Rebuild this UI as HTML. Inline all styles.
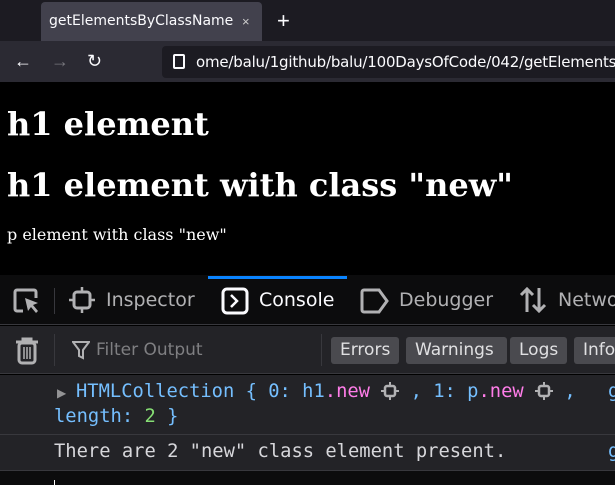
<!DOCTYPE html>
<html><head><style>
*{margin:0;padding:0;box-sizing:border-box}
body{width:615px;height:485px;overflow:hidden;background:#000;font-family:"Liberation Sans",sans-serif;position:relative}
.a{position:absolute;white-space:nowrap}
.mono{font-family:"DejaVu Sans Mono","Liberation Mono",monospace;font-size:18.8px}
.ui{font-family:"DejaVu Sans","Liberation Sans",sans-serif}
.btn{position:absolute;top:337px;height:27px;background:#4a4a4f;border-radius:3px;color:#e0e0e2;font-size:17px;line-height:27px;padding:0 9px}
.ni{display:inline-block;vertical-align:-3px;margin:0}
</style></head><body>
<div class="a" style="left:0;top:0;width:615px;height:41px;background:#1c1b22"></div>
<div class="a" style="left:41px;top:2px;width:221px;height:42px;background:#42414d;border-radius:4px 4px 0 0"></div>
<div class="a ui" style="left:49px;top:13px;color:#fbfbfe;font-size:14px">getElementsByClassName</div>
<div class="a" style="left:242px;top:14px;color:#ccc;font-size:13px">×</div>
<div class="a" style="left:277px;top:8px;color:#fbfbfe;font-size:22px">+</div>
<div class="a" style="left:0;top:41px;width:615px;height:41px;background:#2b2a33"></div>
<div class="a" style="left:14px;top:51px;color:#fbfbfe;font-size:18px">←</div>
<div class="a" style="left:51px;top:51px;color:#77767c;font-size:18px">→</div>
<div class="a" style="left:87px;top:51px;color:#fbfbfe;font-size:18px">↻</div>
<div class="a" style="left:162px;top:46px;width:460px;height:32px;background:#1c1b22;border-radius:4px"></div>
<div class="a" style="left:173px;top:54px;width:12px;height:15px;border:2px solid #fbfbfe;border-radius:2px"></div>
<div class="a ui" style="left:196px;top:53px;color:#fbfbfe;font-size:15px;letter-spacing:-0.2px">ome/balu/1github/balu/100DaysOfCode/042/getElementsBy</div>
<div class="a" style="left:7px;top:105px;color:#fff;font:bold 32px 'DejaVu Serif','Liberation Serif',serif">h1 element</div>
<div class="a" style="left:7px;top:166px;color:#fff;font:bold 32px 'DejaVu Serif','Liberation Serif',serif">h1 element with class "new"</div>
<div class="a" style="left:7px;top:225px;color:#fff;font:16px 'DejaVu Serif','Liberation Serif',serif">p element with class "new"</div>
<div class="a" style="left:0;top:275px;width:615px;height:50px;background:#0c0c0d;border-bottom:1px solid #38383d"></div>
<div class="a" style="left:208px;top:276px;width:139px;height:3px;background:#0a84ff"></div>
<svg class="a" style="left:12px;top:287px" width="30" height="28" viewBox="0 0 30 28"><path d="M11 24H5a2 2 0 0 1-2-2V5a2 2 0 0 1 2-2h17a2 2 0 0 1 2 2v6" fill="none" stroke="#b1b1b3" stroke-width="3"/><path d="M13 11l13 5-5 2 5 6-2 2-5-6-3 4z" fill="#b1b1b3"/></svg>
<div class="a" style="left:54px;top:288px;width:1px;height:26px;background:#38383d"></div>
<svg class="a" style="left:68px;top:286px" width="28" height="28" viewBox="0 0 28 28"><rect x="6" y="6" width="16" height="16" rx="3" fill="none" stroke="#b1b1b3" stroke-width="3"/><path d="M14 1v5M14 22v5M1 14h5M22 14h5" stroke="#b1b1b3" stroke-width="2.5"/></svg>
<div class="a ui" style="left:106px;top:289px;color:#b1b1b3;font-size:19px">Inspector</div>
<svg class="a" style="left:221px;top:287px" width="28" height="28" viewBox="0 0 28 28"><rect x="2" y="2" width="24" height="24" rx="4" fill="none" stroke="#fbfbfe" stroke-width="3"/><path d="M10 8l6 6-6 6" fill="none" stroke="#fbfbfe" stroke-width="2.5"/></svg>
<div class="a ui" style="left:259px;top:289px;color:#fbfbfe;font-size:19px">Console</div>
<svg class="a" style="left:360px;top:288px" width="30" height="26" viewBox="0 0 30 26"><path d="M4 2h15l8 11-8 11H4a2 2 0 0 1-2-2V4a2 2 0 0 1 2-2z" fill="none" stroke="#b1b1b3" stroke-width="3"/></svg>
<div class="a ui" style="left:399px;top:289px;color:#b1b1b3;font-size:19px">Debugger</div>
<svg class="a" style="left:519px;top:286px" width="28" height="28" viewBox="0 0 28 28"><path d="M8 26V3M2 9l6-6 6 6M20 2v23M14 19l6 6 6-6" fill="none" stroke="#b1b1b3" stroke-width="3"/></svg>
<div class="a ui" style="left:558px;top:289px;color:#b1b1b3;font-size:19px">Network</div>
<div class="a" style="left:0;top:326px;width:615px;height:48px;background:#232327;border-bottom:1px solid #38383d"></div>
<svg class="a" style="left:14px;top:336px" width="26" height="30" viewBox="0 0 26 30"><path d="M2 6h22M9 6V3h8v3" fill="none" stroke="#b1b1b3" stroke-width="3"/><rect x="5" y="7" width="16" height="20" rx="3" fill="none" stroke="#b1b1b3" stroke-width="3"/><path d="M10 11v12M13 11v12M16 11v12" stroke="#b1b1b3" stroke-width="1.5"/></svg>
<div class="a" style="left:54px;top:334px;width:1px;height:32px;background:#38383d"></div>
<svg class="a" style="left:72px;top:340px" width="18" height="20" viewBox="0 0 18 20"><path d="M1 2h16l-6 8v8l-4-2v-6z" fill="none" stroke="#b1b1b3" stroke-width="2"/></svg>
<div class="a ui" style="left:96px;top:340px;color:#7f7f82;font-size:17px">Filter Output</div>
<div class="a" style="left:321px;top:334px;width:1px;height:32px;background:#38383d"></div>
<div class="btn ui" style="left:331px">Errors</div>
<div class="btn ui" style="left:406px;width:101px">Warnings</div>
<div class="btn ui" style="left:510px">Logs</div>
<div class="btn ui" style="left:574px">Info</div>
<div class="a" style="left:0;top:375px;width:615px;height:96px;background:#232327"></div>
<div class="a" style="left:0;top:434px;width:615px;height:1px;background:#38383d"></div>
<div class="a" style="left:0;top:470px;width:615px;height:1px;background:#38383d"></div>
<div class="a" style="left:57px;top:386px;color:#939395;font-size:12px">▶</div>
<div class="a mono" style="left:76px;top:381px;color:#75bfff">HTMLCollection { 0: h1<span style="color:#ff7de9">.new</span> <svg class="ni" width="18" height="18" viewBox="0 0 18 18"><rect x="4" y="4" width="10" height="10" rx="2" fill="none" stroke="#b1b1b3" stroke-width="2.5"/><path d="M9 0v4M9 14v4M0 9h4M14 9h4" stroke="#b1b1b3" stroke-width="2"/></svg> , 1: p<span style="color:#ff7de9">.new</span> <svg class="ni" width="18" height="18" viewBox="0 0 18 18"><rect x="4" y="4" width="10" height="10" rx="2" fill="none" stroke="#b1b1b3" stroke-width="2.5"/><path d="M9 0v4M9 14v4M0 9h4M14 9h4" stroke="#b1b1b3" stroke-width="2"/></svg> ,</div>
<div class="a mono" style="left:608px;top:381px;color:#75bfff;background:#232327;width:10px">g</div>
<div class="a mono" style="left:54px;top:406px;color:#75bfff">length: <span style="color:#86de74">2</span> }</div>
<div class="a mono" style="left:54px;top:441px;color:#d7d7db">There are 2 "new" class element present.</div>
<div class="a mono" style="left:608px;top:441px;color:#75bfff">g</div>
<div class="a" style="left:0;top:471px;width:615px;height:14px;background:#0c0c0d"></div>
<div class="a" style="left:54px;top:480px;width:1px;height:5px;background:#fff"></div>
</body></html>
